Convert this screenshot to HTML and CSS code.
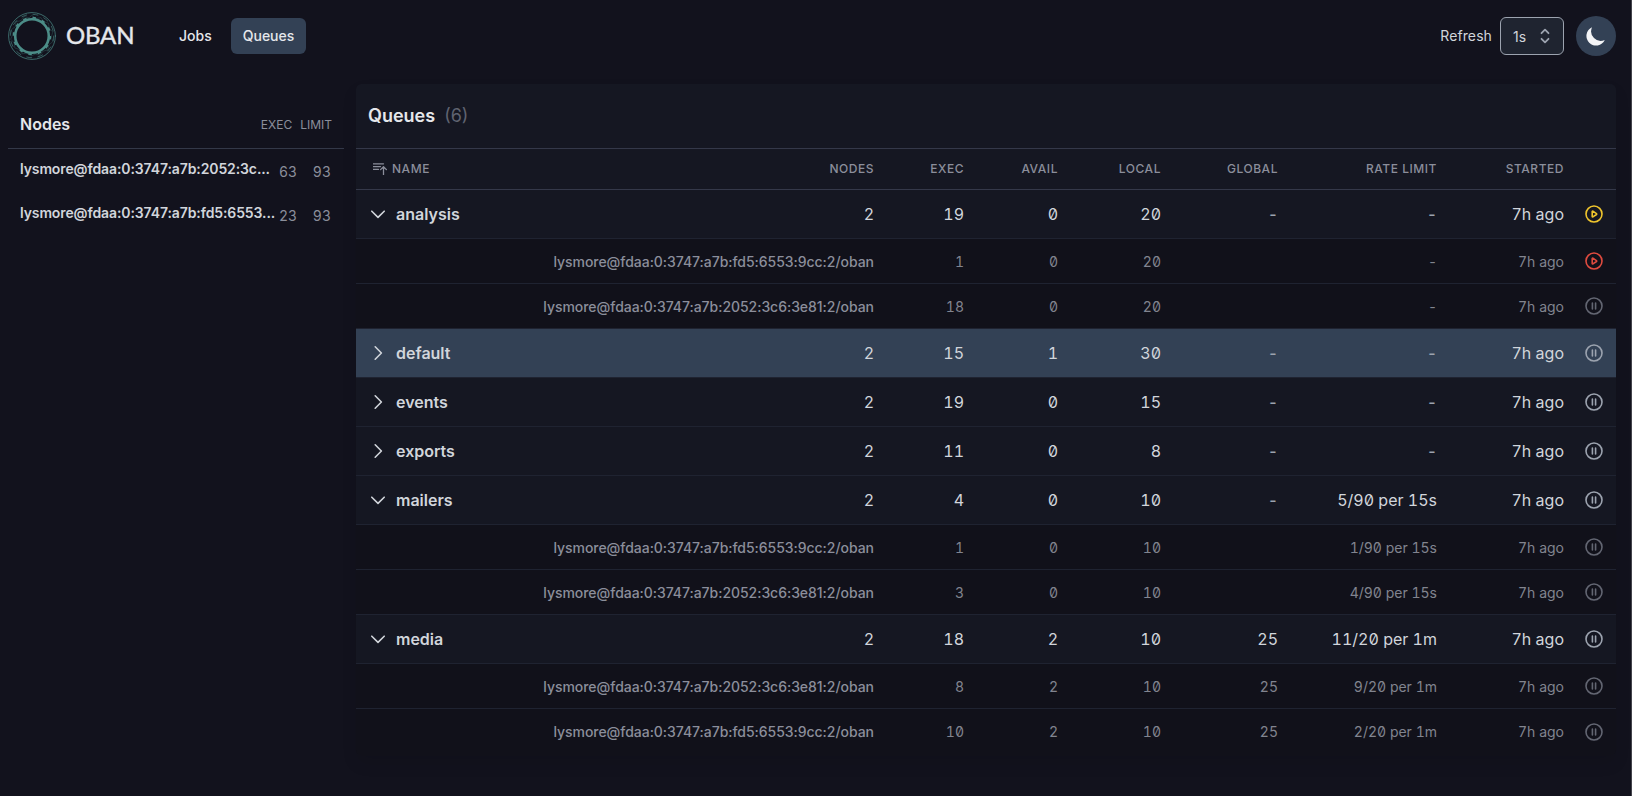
FILE: index.html
```html
<!DOCTYPE html>
<html lang="en">
<head>
<meta charset="utf-8">
<title>Oban Queues</title>
<link rel="stylesheet" href="styles.css">
</head>
<body>
<svg class="defs" width="0" height="0" aria-hidden="true">
  <symbol id="pause" viewBox="0 0 20 20"><circle cx="10" cy="10" r="8"/><path d="M8.400 7.100v5.800M11.600 7.100v5.800"/></symbol>
  <symbol id="play" viewBox="0 0 20 20"><circle cx="10" cy="10" r="8"/><path d="M8.200 7.600v4.800c0 .4.4.6.7.4l3.600-2.300c.3-.2.3-.7 0-.9L8.900 7.200c-.3-.2-.7 0-.7.4Z"/></symbol>
  <symbol id="down" viewBox="0 0 20 20"><path d="M3.800 7.200l6.200 6.200L16.200 7.200"/></symbol>
  <symbol id="right" viewBox="0 0 20 20"><path d="M7.200 3.800l6.200 6.200L7.200 16.200"/></symbol>
</svg>
<header class="topbar">
  <div class="brand">
    <svg class="logo" viewBox="0 0 48 48">
      <circle cx="24" cy="24" r="23.400" class="outer"/>
      <circle cx="24" cy="24" r="21.700" class="dashes"/>
      <circle cx="24" cy="24" r="16.800" class="ring"/>
      <circle cx="24" cy="24" r="18.300" class="teeth"/>
      <path class="wave" d="M24 3.500l4 3 5-.8 2.500 4 5 1.600.7 5 3.600 3.700-1.500 4.800 1.500 4.800-4 3.300-.8 5-5 1.200-3 4-4.600-1.100L23 44l-4-2.800-5 .6-2.400-4.300-4.800-1.500-.5-5-3.600-3.800 2-4.600-1.500-4.900 4.200-3L8 9.700l5-1 3-4.200 4.700 1.200Z"/>
    </svg>
    <span class="wordmark">OBAN</span>
  </div>
  <nav class="nav"><a>Jobs</a><a class="current">Queues</a></nav>
  <div class="controls">
    <span class="refresh">Refresh</span>
    <div class="select"><span>1s</span><svg viewBox="0 0 20 20"><path d="M6.500 7.200L10 3.700l3.500 3.500M6.500 12.800l3.500 3.500 3.500-3.500"/></svg></div>
    <div class="theme"><svg viewBox="0 0 20 20"><path d="M17.300 13.300A8 8 0 0 1 6.700 2.700a8 8 0 1 0 10.600 10.600Z"/></svg></div>
  </div>
</header>
<main class="layout">
  <aside class="sidebar">
    <div class="side-head"><h2>Nodes</h2><span>EXEC</span><span class="limit">LIMIT</span></div>
    <div class="node"><span class="node-name">lysmore@fdaa:0:3747:a7b:2052:3c...</span><span class="num">63</span><span class="num">93</span></div>
    <div class="node"><span class="node-name">lysmore@fdaa:0:3747:a7b:fd5:6553...</span><span class="num">23</span><span class="num">93</span></div>
  </aside>
  <section class="panel">
    <div class="title"><h1>Queues</h1><span>(6)</span></div>
    <div class="row head"><span class="name"><svg class="sort" viewBox="0 0 14 12"><path d="M0 .8h10.500M0 3.600h7.500M0 6.400h5.500M10.500 11.800V4M7.600 6.600L10.500 3.700l2.900 2.900"/></svg>NAME</span><span>NODES</span><span>EXEC</span><span>AVAIL</span><span>LOCAL</span><span>GLOBAL</span><span>RATE LIMIT</span><span>STARTED</span></div>
    <div class="row"><span class="name"><svg><use href="#down"/></svg>analysis</span><span>2</span><span>19</span><span>0</span><span>20</span><span class="dim">-</span><span class="dim">-</span><span>7h ago</span><svg class="act partial"><use href="#play"/></svg></div>
    <div class="row sub"><span class="host">lysmore@fdaa:0:3747:a7b:fd5:6553:9cc:2/oban</span><span>1</span><span>0</span><span>20</span><span></span><span>-</span><span>7h ago</span><svg class="act paused"><use href="#play"/></svg></div>
    <div class="row sub"><span class="host">lysmore@fdaa:0:3747:a7b:2052:3c6:3e81:2/oban</span><span>18</span><span>0</span><span>20</span><span></span><span>-</span><span>7h ago</span><svg class="act"><use href="#pause"/></svg></div>
    <div class="row active"><span class="name"><svg><use href="#right"/></svg>default</span><span>2</span><span>15</span><span>1</span><span>30</span><span class="dim">-</span><span class="dim">-</span><span>7h ago</span><svg class="act"><use href="#pause"/></svg></div>
    <div class="row"><span class="name"><svg><use href="#right"/></svg>events</span><span>2</span><span>19</span><span>0</span><span>15</span><span class="dim">-</span><span class="dim">-</span><span>7h ago</span><svg class="act"><use href="#pause"/></svg></div>
    <div class="row"><span class="name"><svg><use href="#right"/></svg>exports</span><span>2</span><span>11</span><span>0</span><span>8</span><span class="dim">-</span><span class="dim">-</span><span>7h ago</span><svg class="act"><use href="#pause"/></svg></div>
    <div class="row"><span class="name"><svg><use href="#down"/></svg>mailers</span><span>2</span><span>4</span><span>0</span><span>10</span><span class="dim">-</span><span>5/90 per 15s</span><span>7h ago</span><svg class="act"><use href="#pause"/></svg></div>
    <div class="row sub"><span class="host">lysmore@fdaa:0:3747:a7b:fd5:6553:9cc:2/oban</span><span>1</span><span>0</span><span>10</span><span></span><span>1/90 per 15s</span><span>7h ago</span><svg class="act"><use href="#pause"/></svg></div>
    <div class="row sub"><span class="host">lysmore@fdaa:0:3747:a7b:2052:3c6:3e81:2/oban</span><span>3</span><span>0</span><span>10</span><span></span><span>4/90 per 15s</span><span>7h ago</span><svg class="act"><use href="#pause"/></svg></div>
    <div class="row"><span class="name"><svg><use href="#down"/></svg>media</span><span>2</span><span>18</span><span>2</span><span>10</span><span>25</span><span>11/20 per 1m</span><span>7h ago</span><svg class="act"><use href="#pause"/></svg></div>
    <div class="row sub"><span class="host">lysmore@fdaa:0:3747:a7b:2052:3c6:3e81:2/oban</span><span>8</span><span>2</span><span>10</span><span>25</span><span>9/20 per 1m</span><span>7h ago</span><svg class="act"><use href="#pause"/></svg></div>
    <div class="row sub"><span class="host">lysmore@fdaa:0:3747:a7b:fd5:6553:9cc:2/oban</span><span>10</span><span>2</span><span>10</span><span>25</span><span>2/20 per 1m</span><span>7h ago</span><svg class="act"><use href="#pause"/></svg></div>
  </section>
</main>
</body>
</html>
```

FILE: styles.css
```css
* { box-sizing: border-box; margin: 0; padding: 0; }
.defs { position: absolute; }
body {
  height: 796px;
  overflow: hidden;
  background: #12121d;
  border-right: 1px solid #44444c;
  color: #d1d5db;
  font-family: Inter, "Liberation Sans", sans-serif;
  font-size: 16px;
}
svg { fill: none; stroke: currentColor; stroke-linecap: round; stroke-linejoin: round; flex: none; }

.topbar { display: flex; align-items: center; height: 72px; padding: 0 15px 0 8px; }
.brand { display: flex; align-items: center; width: 159px; gap: 10px; }
.logo { width: 48px; height: 48px; color: #4c8d88; }
.logo .outer { stroke-width: .9; opacity: .8; }
.logo .dashes { stroke-width: 1; stroke-dasharray: 5 6.400; opacity: .6; }
.logo .ring { stroke-width: 2.600; }
.logo .teeth { stroke-width: 1.800; stroke-dasharray: 3.500 6.080; stroke-linecap: butt; }
.logo .wave { stroke-width: .6; opacity: .45; }
.wordmark { font-family: Lato, sans-serif; font-size: 24px; letter-spacing: -.2px; line-height: 26px; padding-bottom: 2px; color: #e5e7eb; -webkit-text-stroke: .4px #e5e7eb; }
.nav { display: flex; gap: 7px; font-size: 14px; font-weight: 500; color: #e5e7eb; }
.nav a { height: 36px; line-height: 36px; padding: 0 12px; border-radius: 6px; }
.nav .current { background: #334155; }
.controls { display: flex; align-items: center; margin-left: auto; }
.refresh { font-size: 14px; letter-spacing: .1px; margin-right: 8px; padding-bottom: 2px; }
.select { display: flex; align-items: center; justify-content: space-between; width: 64px; height: 38px; padding: 0 8px 0 12px; margin-right: 12px; border: 1px solid #9ca3af; border-radius: 6px; background: #1f2430; font-size: 14px; }
.select svg { width: 20px; height: 20px; stroke-width: 1.800; color: #9ca3af; }
.theme { display: flex; align-items: center; justify-content: center; width: 40px; height: 40px; border-radius: 50%; background: #334155; }
.theme svg { width: 24px; height: 24px; fill: #f3f4f6; stroke: none; }

.layout { display: flex; gap: 12px; align-items: flex-start; padding: 12px 15px 0 8px; }
.sidebar { width: 336px; padding-top: 16px; }
.side-head { display: flex; align-items: center; height: 49px; padding: 0 12px; border-bottom: 1px solid #333848; font-size: 12px; color: #8b8e9b; }
.side-head h2 { flex: 1; font-size: 16px; font-weight: 600; color: #e5e7eb; }
.side-head .limit { margin-left: 8px; }
.node { display: flex; height: 44px; padding: 10px 13px 0 12px; font-size: 14px; }
.node-name { flex: 1; min-width: 0; white-space: nowrap; font-weight: 600; letter-spacing: -.11px; line-height: 20px; }
.num { width: 17px; padding-top: 4px; text-align: right; color: #8b8e9b; line-height: 17px; font-variant-numeric: tabular-nums; }
.num + .num { width: 35px; }

.panel { width: 1260px; border-radius: 6px; overflow: hidden; background: linear-gradient(#151722 90%, #11111a 90%); padding-bottom: 2px; box-shadow: 0 8px 16px rgba(0, 0, 0, .08); }
.title { display: flex; align-items: center; gap: 9px; height: 65px; padding: 0 12px 1px; border-bottom: 1px solid #343849; font-size: 18px; color: #5f6370; }
.title h1 { font-size: 18px; font-weight: 600; color: #e5e7eb; }
.row {
  display: grid;
  grid-template-columns: 200px 318px 90px 94px 103px 117px 159px 127px 52px;
  align-items: center;
  height: 49px;
  border-bottom: 1px solid #1f2331;
  text-align: right;
  font-variant-numeric: tabular-nums slashed-zero;
}
.row .name { display: flex; align-items: center; font-weight: 600; padding-left: 12px; }
.name svg { width: 20px; height: 20px; margin-right: 8px; stroke-width: 1.600; }
.row.head { height: 41px; padding-bottom: 1px; border-color: #343849; font-size: 12px; font-weight: 500; letter-spacing: .54px; color: #8b8e9b; }
.head .name { font-weight: 500; padding-left: 17px; }
.name .sort { width: 14px; height: 12px; margin-right: 5px; stroke-width: 1.300; }
.row.sub { grid-template-columns: 518px 90px 94px 103px 117px 159px 127px 52px; height: 45px; background: #11111a; font-size: 14px; color: #81848f; }
.row.sub:last-child { border: 0; }
.sub .host { font-weight: 500; font-variant-numeric: normal; letter-spacing: -.04px; color: #8b8e9b; }
.row.active { background: #334155; }
.row .dim { color: #9ca3af; font-weight: 500; }
.act { justify-self: center; width: 20px; height: 20px; margin-left: 8px; stroke-width: 1.600; color: #9ca3af; }
.sub .act { color: #636672; }
.row .act.partial { color: #eec42d; }
.row .act.paused { color: #df4b3f; }
```
